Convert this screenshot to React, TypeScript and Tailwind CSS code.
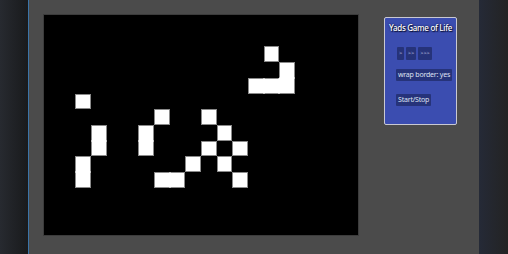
const alive = new Set([
  "2,5", "3,7", "3,8", "2,9", "2,10", "6,7", "6,8", "7,6", "7,10", "8,10",
  "9,9", "10,6", "11,7", "10,8", "11,9", "12,8", "12,10",
  "14,2", "15,3", "15,4", "13,4", "14,4",
]);

const COLS = 20;
const ROWS = 14;

const isOn = (c: number, r: number) => alive.has(`${c},${r}`);

const App = () => {
  const cells = [];
  for (let r = 0; r < ROWS; r++) {
    for (let c = 0; c < COLS; c++) {
      const on = isOn(c, r);
      // outline only on edges that face a dead cell, so neighbours merge
      const edges = on
        ? [
            isOn(c, r - 1) ? "border-t-white" : "border-t-[#8a8a8a]",
            isOn(c, r + 1) ? "border-b-white" : "border-b-[#8a8a8a]",
            isOn(c - 1, r) ? "border-l-white" : "border-l-[#8a8a8a]",
            isOn(c + 1, r) ? "border-r-white" : "border-r-[#8a8a8a]",
          ].join(" ")
        : "";
      cells.push(
        <div
          key={`${c}-${r}`}
          className={on ? `bg-white border ${edges}` : "bg-black"}
        />
      );
    }
  }

  return (
    <div
      className="flex w-[508px] h-[254px] overflow-hidden"
      style={{ fontFamily: '"Noto Sans", "DejaVu Sans", sans-serif' }}
    >
      <div className="w-[28px] h-full bg-gradient-to-r from-[#272a30] to-[#191a1c]" />
      <div className="w-px h-full bg-[#3b74a8]" />

      {/* main area */}
      <div className="flex-1 h-full bg-[#4b4b4b] flex items-start pl-[14px] pt-[14px]">
        <div className="border border-[#3c3c3c]">
          <div className="grid grid-cols-20 grid-rows-14 w-[314px] h-[220px] bg-black">
            {cells}
          </div>
        </div>

        {/* control panel */}
        <div className="ml-[25px] mt-[3px] w-[73px] h-[108px] rounded-[2px] border border-[#c9c9d2] bg-[#3b4db0] flex flex-col">
          <div className="mt-[5px] text-center text-[8px] font-medium leading-[10px] text-white [text-shadow:0_0_2px_#0a0f30,1px_1px_1px_#0a0f30] tracking-[-0.3px] whitespace-nowrap">
            Yads Game of Life
          </div>
          <div className="flex gap-[2px] ml-[12px] mt-[14px]">
            <button className="w-[7px] h-[13px] bg-[#26337a] rounded-[1px] text-[5.5px] text-[#c8cce8] leading-[13px]">
              &gt;
            </button>
            <button className="w-[10px] h-[13px] bg-[#26337a] rounded-[1px] text-[5.5px] text-[#c8cce8] leading-[13px]">
              &gt;&gt;
            </button>
            <button className="w-[14px] h-[13px] bg-[#26337a] rounded-[1px] text-[5.5px] text-[#c8cce8] leading-[13px]">
              &gt;&gt;&gt;
            </button>
          </div>
          <button className="self-start ml-[11px] mt-[9px] h-[12px] px-[2px] bg-[#26337a] rounded-[1px] text-[7px] leading-[12px] text-[#dfe2f2] whitespace-nowrap tracking-[-0.2px]">
            wrap border: yes
          </button>
          <button className="self-start ml-[11px] mt-[13px] h-[12px] px-[2px] bg-[#26337a] rounded-[1px] text-[7px] leading-[12px] text-[#dfe2f2] whitespace-nowrap tracking-[-0.2px]">
            Start/Stop
          </button>
        </div>
      </div>

      <div className="w-[29px] h-full bg-gradient-to-r from-[#252a37] to-[#232323]" />
    </div>
  );
};

export default App;
